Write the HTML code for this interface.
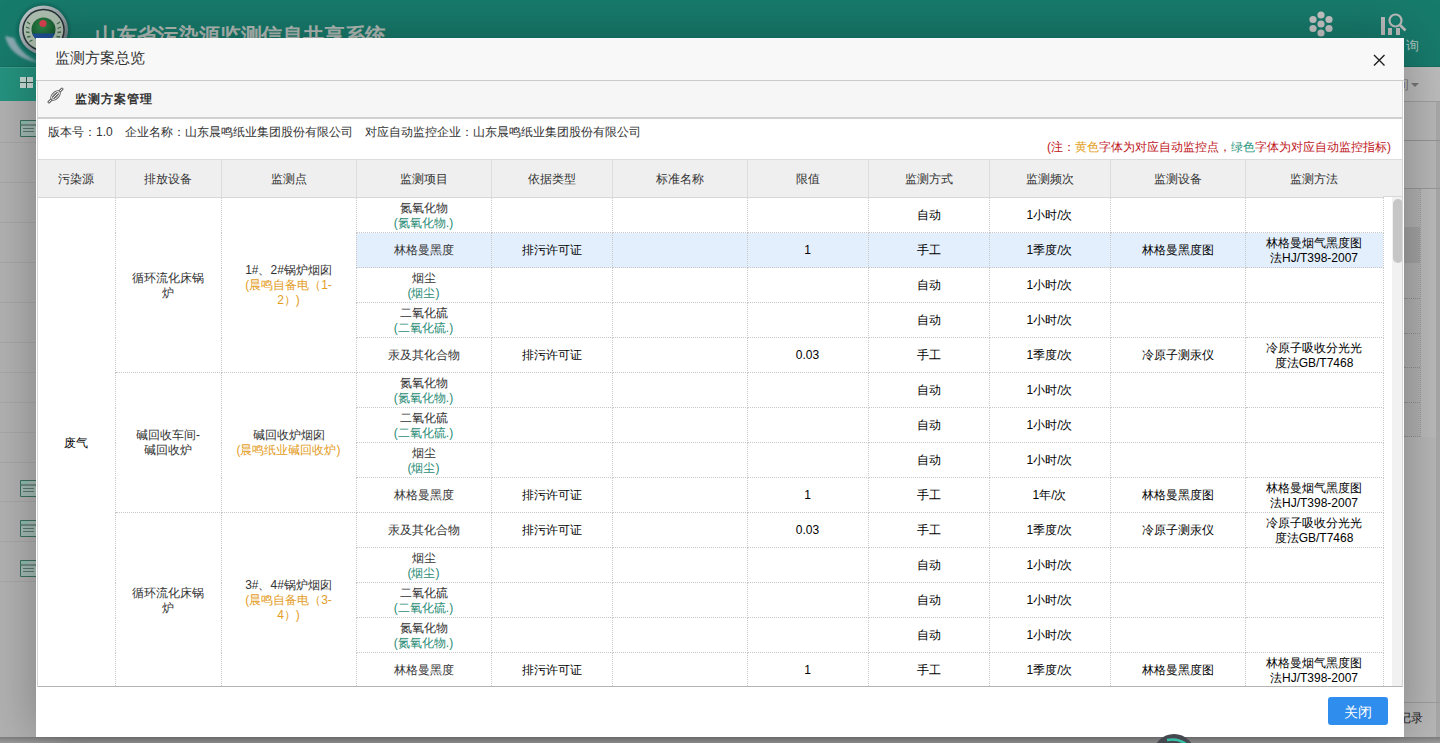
<!DOCTYPE html>
<html><head><meta charset="utf-8">
<style>
*{box-sizing:border-box}
html,body{margin:0;padding:0}
body{width:1440px;height:743px;overflow:hidden;position:relative;background:#b2b2b2;font-family:"Liberation Sans",sans-serif;font-size:12px;color:#333}
.abs{position:absolute}
/* background page */
#hdr{left:0;top:0;width:1440px;height:67px;background:#177b6c}
#hdr:after{content:"";position:absolute;left:0;right:0;bottom:0;height:1px;background:#156f62}
#nav{left:0;top:67px;width:1440px;height:34px;background:#25937f;border-top:1px solid #3aa08e}
#nav2{left:1404px;top:67px;width:36px;height:35px;background:#bdbdbd;border-bottom:1px solid #a0a0a0}
#title{left:95px;top:22px;font-size:21px;font-weight:bold;color:#b3bcb8;letter-spacing:-0.2px;white-space:nowrap}
.side-line{position:absolute;left:0;width:36px;height:1px;background:#a8a8a8}
.folder{position:absolute;left:20px;width:16px;height:15px;border:1px solid #3f8f7f;border-top-width:3px}
#bottomband{left:0;top:737px;width:1440px;height:6px;background:linear-gradient(#7d7d7d,#8a8a8a 2px,#9c9c9c)}
/* modal */
#modal{left:36px;top:38px;width:1368px;height:699px;background:#fff;box-shadow:1px 1px 50px rgba(0,0,0,.3)}
#mhead{left:0;top:0;width:1368px;height:43px;background:#f8f8f8;border-bottom:1px solid #cbcbcb}
#mtitle{left:19px;top:11px;font-size:15px;color:#333;white-space:nowrap}
#close{left:1337px;top:16px;width:12px;height:12px}
#panel{left:1px;top:43px;width:1366px;height:606px;border:1px solid #d6d6d6;border-bottom-color:#b4b4b4;border-top:none;background:#fff;overflow:hidden}
#phead{left:0;top:0;width:1366px;height:38px;background:#f6f6f6;border-bottom:2px solid #d0d0d0}
#ptitle{left:37px;top:10px;font-size:12px;letter-spacing:1px;font-weight:bold;color:#333;white-space:nowrap}
.info{position:absolute;top:43px;white-space:nowrap;font-size:12px;color:#333}
#note{position:absolute;right:11px;top:58px;white-space:nowrap;font-size:12px;color:#c0161c}
#note .y{color:#e3a01a}#note .gg{color:#2a9580}
#tblwrap{position:absolute;left:0;top:78px;width:1366px;height:527px;overflow:hidden}
#thbg{position:absolute;left:0;top:0;width:1366px;height:38px;background:#efefef;border-top:1px solid #dcdcdc;border-bottom:1px solid #d8d8d8}
table{border-collapse:collapse;table-layout:fixed;position:absolute;left:0;top:0}
th{height:38px;font-weight:normal;background:#efefef;border-left:1px solid #dcdcdc;border-top:1px solid #dcdcdc;border-bottom:1px solid #d8d8d8;padding:2px 0 0;color:#333}
th:first-child{border-left:none}
td{height:35px;padding:1px 2px 0;text-align:center;vertical-align:middle;border:1px dotted #c8c8c8;color:#000;line-height:15px;font-weight:500}
td.c1{color:#333}
td.src{color:#000;border-left:none}
tr.hl td{background:#e4effd}
.g{color:#2a8c76}
.o{color:#e39c1e}
#sbtrack{position:absolute;left:1354px;top:38px;width:12px;height:489px;background:#f1f1f1}
#sbthumb{position:absolute;left:1355px;top:40px;width:10px;height:64px;background:#c6c6c6;border-radius:5px}
#btn{left:1292px;top:659px;width:60px;height:28px;background:#2e8ded;border-radius:3px;color:#fff;font-size:14px;text-align:center;line-height:30px}
</style></head><body>
<div id="hdr" class="abs"></div>
<div id="nav" class="abs"></div>
<div id="nav2" class="abs"></div>
<!-- logo -->
<svg class="abs" style="left:0;top:0" width="100" height="70" viewBox="0 0 100 70">
  <defs>
    <linearGradient id="sil" x1="0" y1="0" x2="1" y2="1"><stop offset="0" stop-color="#c9d0d2"/><stop offset=".6" stop-color="#8f9a9e"/><stop offset="1" stop-color="#5e6b70"/></linearGradient>
    <radialGradient id="glb" cx=".45" cy=".35" r=".7"><stop offset="0" stop-color="#2f8a4c"/><stop offset="1" stop-color="#0f4d28"/></radialGradient>
    <filter id="bl"><feGaussianBlur stdDeviation="1.2"/></filter>
  </defs>
  <path d="M5 36 Q10 58 40 63 Q20 54 14 38 Z" fill="#a8b6c4" opacity=".8" filter="url(#bl)"/>
  <circle cx="43.5" cy="30" r="27" fill="#0f5f55" opacity=".6" filter="url(#bl)"/>
  <circle cx="43.5" cy="30" r="24.5" fill="url(#sil)"/>
  <circle cx="43.5" cy="30" r="21.3" fill="#263238"/>
  <circle cx="43.5" cy="30" r="19.8" fill="#aebfb0"/>
  <g stroke="#3f6f4a" stroke-width="1.3" fill="none">
    <path d="M27 22 l3 2 M26 27 l3.5 1.5 M26 32 l3.5 0.5 M27 37 l3.5 -0.5 M29.5 41.5 l3 -1.5"/>
    <path d="M60 22 l-3 2 M61 27 l-3.5 1.5 M61 32 l-3.5 0.5 M60 37 l-3.5 -0.5 M57.5 41.5 l-3 -1.5"/>
  </g>
  <circle cx="43.5" cy="29.5" r="12" fill="url(#glb)"/>
  <path d="M32.2 33.5 A12 12 0 0 0 54.8 33.5 Z" fill="#1f4f96"/>
  <circle cx="43" cy="23.5" r="3.6" fill="#d8404f"/>
</svg>
<div id="title" class="abs">山东省污染源监测信息共享系统</div>
<!-- right icons -->
<svg class="abs" style="left:1300px;top:8px" width="140" height="48" viewBox="0 0 140 48">
  <g fill="#c6c6c6">
    <circle cx="21" cy="7" r="3.6"/><circle cx="13" cy="11.5" r="3.6"/><circle cx="29" cy="11.5" r="3.6"/>
    <circle cx="21" cy="16" r="3.6"/><circle cx="13" cy="20.5" r="3.6"/><circle cx="29" cy="20.5" r="3.6"/>
    <circle cx="21" cy="25" r="3.6"/>
  </g>
  <g fill="#bcbcbc">
    <rect x="81" y="9" width="4" height="18"/><rect x="88" y="20" width="4" height="7"/><rect x="96" y="20" width="4" height="7"/>
  </g>
  <circle cx="95.5" cy="12.5" r="6" fill="none" stroke="#bcbcbc" stroke-width="2.2"/>
  <path d="M100 17 L105.5 22.5" stroke="#bcbcbc" stroke-width="2.6"/>
</svg>
<div class="abs" style="left:1406px;top:37px;font-size:13px;color:#b0c8c2">询</div>
<div class="abs" style="left:1396px;top:76px;font-size:13px;color:#777">间</div>
<svg class="abs" style="left:1411px;top:83px" width="10" height="5"><path d="M0 0 L8 0 L4 4Z" fill="#777"/></svg>
<!-- grid icon -->
<svg class="abs" style="left:20px;top:77px" width="14" height="12"><rect x="0" y="0" width="13" height="11" fill="#2d5f55"/><g fill="#c9dcd8"><rect x="0" y="0" width="6" height="5"/><rect x="7" y="0" width="6" height="5"/><rect x="0" y="6" width="6" height="5"/><rect x="7" y="6" width="6" height="5"/></g></svg>
<!-- sidebar -->
<div class="side-line" style="top:142px"></div>
<div class="side-line" style="top:182px"></div>
<div class="side-line" style="top:222px"></div>
<div class="side-line" style="top:262px"></div>
<div class="side-line" style="top:302px"></div>
<div class="side-line" style="top:342px"></div>
<div class="side-line" style="top:372px"></div>
<div class="side-line" style="top:402px"></div>
<div class="side-line" style="top:432px"></div>
<div class="side-line" style="top:462px"></div>
<div class="side-line" style="top:501px"></div>
<div class="side-line" style="top:541px"></div>
<div class="side-line" style="top:581px"></div>
<svg class="abs" style="left:20px;top:120px" width="17" height="17" viewBox="0 0 17 17"><path d="M0.5 0.5 H16.5 V16.5 H0.5 Z" fill="#a3bab3" stroke="#3c6f62" stroke-width="1"/><path d="M1 1 H8 V4.5 H1 Z" fill="#8fbfae"/><path d="M0.5 5 H16.5" stroke="#4f6f66" stroke-width="1.2"/><path d="M3 8.5 H14 M3 11.5 H14" stroke="#5a7a70" stroke-width="1"/></svg>
<svg class="abs" style="left:20px;top:480px" width="17" height="17" viewBox="0 0 17 17"><path d="M0.5 0.5 H16.5 V16.5 H0.5 Z" fill="#a3bab3" stroke="#3c6f62" stroke-width="1"/><path d="M1 1 H8 V4.5 H1 Z" fill="#8fbfae"/><path d="M0.5 5 H16.5" stroke="#4f6f66" stroke-width="1.2"/><path d="M3 8.5 H14 M3 11.5 H14" stroke="#5a7a70" stroke-width="1"/></svg>
<svg class="abs" style="left:20px;top:520px" width="17" height="17" viewBox="0 0 17 17"><path d="M0.5 0.5 H16.5 V16.5 H0.5 Z" fill="#a3bab3" stroke="#3c6f62" stroke-width="1"/><path d="M1 1 H8 V4.5 H1 Z" fill="#8fbfae"/><path d="M0.5 5 H16.5" stroke="#4f6f66" stroke-width="1.2"/><path d="M3 8.5 H14 M3 11.5 H14" stroke="#5a7a70" stroke-width="1"/></svg>
<svg class="abs" style="left:20px;top:560px" width="17" height="17" viewBox="0 0 17 17"><path d="M0.5 0.5 H16.5 V16.5 H0.5 Z" fill="#a3bab3" stroke="#3c6f62" stroke-width="1"/><path d="M1 1 H8 V4.5 H1 Z" fill="#8fbfae"/><path d="M0.5 5 H16.5" stroke="#4f6f66" stroke-width="1.2"/><path d="M3 8.5 H14 M3 11.5 H14" stroke="#5a7a70" stroke-width="1"/></svg>
<div class="abs" style="left:1404px;top:102px;width:36px;height:635px;background:#b8b8b8"></div>
<div class="abs" style="left:1436px;top:102px;width:4px;height:635px;background:#a9a9a9"></div>
<div class="abs" style="left:1404px;top:140px;width:36px;height:1px;background:#959595"></div>
<div class="abs" style="left:1404px;top:188px;width:36px;height:1px;background:#999"></div>
<div class="abs" style="left:1404px;top:189px;width:16px;height:248px;background:#b2b2b2"></div>
<div class="abs" style="left:1420px;top:189px;width:16px;height:248px;background:#bcbcbc;border-left:1px dotted #a0a0a0"></div>
<div class="abs" style="left:1404px;top:227px;width:16px;height:36px;background:#a4a4a4"></div>
<div class="abs" style="left:1404px;top:298px;width:16px;height:0;border-top:1px dotted #8f8f8f"></div>
<div class="abs" style="left:1404px;top:333px;width:16px;height:0;border-top:1px dotted #8f8f8f"></div>
<div class="abs" style="left:1404px;top:367px;width:16px;height:0;border-top:1px dotted #8f8f8f"></div>
<div class="abs" style="left:1404px;top:402px;width:16px;height:0;border-top:1px dotted #8f8f8f"></div>
<div class="abs" style="left:1404px;top:436px;width:16px;height:0;border-top:1px dotted #8f8f8f"></div>
<div class="abs" style="left:1404px;top:702px;width:36px;height:1px;background:#9e9e9e"></div>
<div class="abs" style="left:1399px;top:710px;font-size:12px;color:#1a1a1a">记录</div>
<div id="bottomband" class="abs"></div>

<div id="modal" class="abs">
  <div id="mhead" class="abs"><div id="mtitle" class="abs">监测方案总览</div>
    <svg id="close" class="abs" viewBox="0 0 12 12"><path d="M1 1 L11.5 11.5 M11.5 1 L1 11.5" stroke="#1e1e1e" stroke-width="1.4"/></svg>
  </div>
  <div id="panel" class="abs">
    <div id="phead" class="abs">
      <svg class="abs" style="left:9px;top:6px" width="17" height="17" viewBox="0 0 17 17"><g stroke-linecap="round" fill="none"><path d="M2 15 L15 2" stroke="#6a6a6a" stroke-width="3"/><path d="M2 15 L15 2" stroke="#f2f2f2" stroke-width="1"/><ellipse cx="8.5" cy="8.5" rx="5" ry="2.6" transform="rotate(-45 8.5 8.5)" stroke="#6a6a6a" stroke-width="2.6"/><ellipse cx="8.5" cy="8.5" rx="5" ry="2.6" transform="rotate(-45 8.5 8.5)" stroke="#f2f2f2" stroke-width="0.9"/></g></svg>
      <div id="ptitle" class="abs">监测方案管理</div>
    </div>
    <div class="info" style="left:10px">版本号：1.0</div>
    <div class="info" style="left:87px">企业名称：山东晨鸣纸业集团股份有限公司</div>
    <div class="info" style="left:327px">对应自动监控企业：山东晨鸣纸业集团股份有限公司</div>
    <div id="note">(注：<span class="y">黄色</span>字体为对应自动监控点，<span class="gg">绿色</span>字体为对应自动监控指标)</div>
    <div id="tblwrap">
      <div id="thbg"></div>
      <table>
        <colgroup><col style="width:77px"><col style="width:106px"><col style="width:135px"><col style="width:135px"><col style="width:121px"><col style="width:135px"><col style="width:121px"><col style="width:121px"><col style="width:121px"><col style="width:135px"><col style="width:138px"></colgroup>
        <tr><th>污染源</th><th>排放设备</th><th>监测点</th><th>监测项目</th><th>依据类型</th><th>标准名称</th><th>限值</th><th>监测方式</th><th>监测频次</th><th>监测设备</th><th>监测方法</th></tr>
<tr><td rowspan="14" class="src">废气</td><td rowspan="5" class="c1">循环流化床锅<br>炉</td><td rowspan="5" class="c1">1#、2#锅炉烟囱<br><span class="o">(晨鸣自备电（1-<br>2）)</span></td><td class="c1">氮氧化物<br><span class="g">(氮氧化物.)</span></td><td></td><td></td><td></td><td>自动</td><td>1小时/次</td><td></td><td></td></tr>
<tr class="hl"><td class="c1">林格曼黑度</td><td>排污许可证</td><td></td><td>1</td><td>手工</td><td>1季度/次</td><td>林格曼黑度图</td><td>林格曼烟气黑度图<br>法HJ/T398-2007</td></tr>
<tr><td class="c1">烟尘<br><span class="g">(烟尘)</span></td><td></td><td></td><td></td><td>自动</td><td>1小时/次</td><td></td><td></td></tr>
<tr><td class="c1">二氧化硫<br><span class="g">(二氧化硫.)</span></td><td></td><td></td><td></td><td>自动</td><td>1小时/次</td><td></td><td></td></tr>
<tr><td class="c1">汞及其化合物</td><td>排污许可证</td><td></td><td>0.03</td><td>手工</td><td>1季度/次</td><td>冷原子测汞仪</td><td>冷原子吸收分光光<br>度法GB/T7468</td></tr>
<tr><td rowspan="4" class="c1">碱回收车间-<br>碱回收炉</td><td rowspan="4" class="c1">碱回收炉烟囱<br><span class="o">(晨鸣纸业碱回收炉)</span></td><td class="c1">氮氧化物<br><span class="g">(氮氧化物.)</span></td><td></td><td></td><td></td><td>自动</td><td>1小时/次</td><td></td><td></td></tr>
<tr><td class="c1">二氧化硫<br><span class="g">(二氧化硫.)</span></td><td></td><td></td><td></td><td>自动</td><td>1小时/次</td><td></td><td></td></tr>
<tr><td class="c1">烟尘<br><span class="g">(烟尘)</span></td><td></td><td></td><td></td><td>自动</td><td>1小时/次</td><td></td><td></td></tr>
<tr><td class="c1">林格曼黑度</td><td>排污许可证</td><td></td><td>1</td><td>手工</td><td>1年/次</td><td>林格曼黑度图</td><td>林格曼烟气黑度图<br>法HJ/T398-2007</td></tr>
<tr><td rowspan="5" class="c1">循环流化床锅<br>炉</td><td rowspan="5" class="c1">3#、4#锅炉烟囱<br><span class="o">(晨鸣自备电（3-<br>4）)</span></td><td class="c1">汞及其化合物</td><td>排污许可证</td><td></td><td>0.03</td><td>手工</td><td>1季度/次</td><td>冷原子测汞仪</td><td>冷原子吸收分光光<br>度法GB/T7468</td></tr>
<tr><td class="c1">烟尘<br><span class="g">(烟尘)</span></td><td></td><td></td><td></td><td>自动</td><td>1小时/次</td><td></td><td></td></tr>
<tr><td class="c1">二氧化硫<br><span class="g">(二氧化硫.)</span></td><td></td><td></td><td></td><td>自动</td><td>1小时/次</td><td></td><td></td></tr>
<tr><td class="c1">氮氧化物<br><span class="g">(氮氧化物.)</span></td><td></td><td></td><td></td><td>自动</td><td>1小时/次</td><td></td><td></td></tr>
<tr><td class="c1">林格曼黑度</td><td>排污许可证</td><td></td><td>1</td><td>手工</td><td>1季度/次</td><td>林格曼黑度图</td><td>林格曼烟气黑度图<br>法HJ/T398-2007</td></tr>
      </table>
      <div id="sbtrack"></div>
      <div id="sbthumb"></div>
    </div>
  </div>
  <div id="btn" class="abs">关闭</div>
</div>
<svg class="abs" style="left:1150px;top:730px" width="50" height="13" viewBox="0 0 50 13"><circle cx="24" cy="25" r="21" fill="#45484e"/><path d="M17 10 Q28 8 36 14" stroke="#38c0a8" stroke-width="2.5" fill="none"/></svg>
</body></html>
